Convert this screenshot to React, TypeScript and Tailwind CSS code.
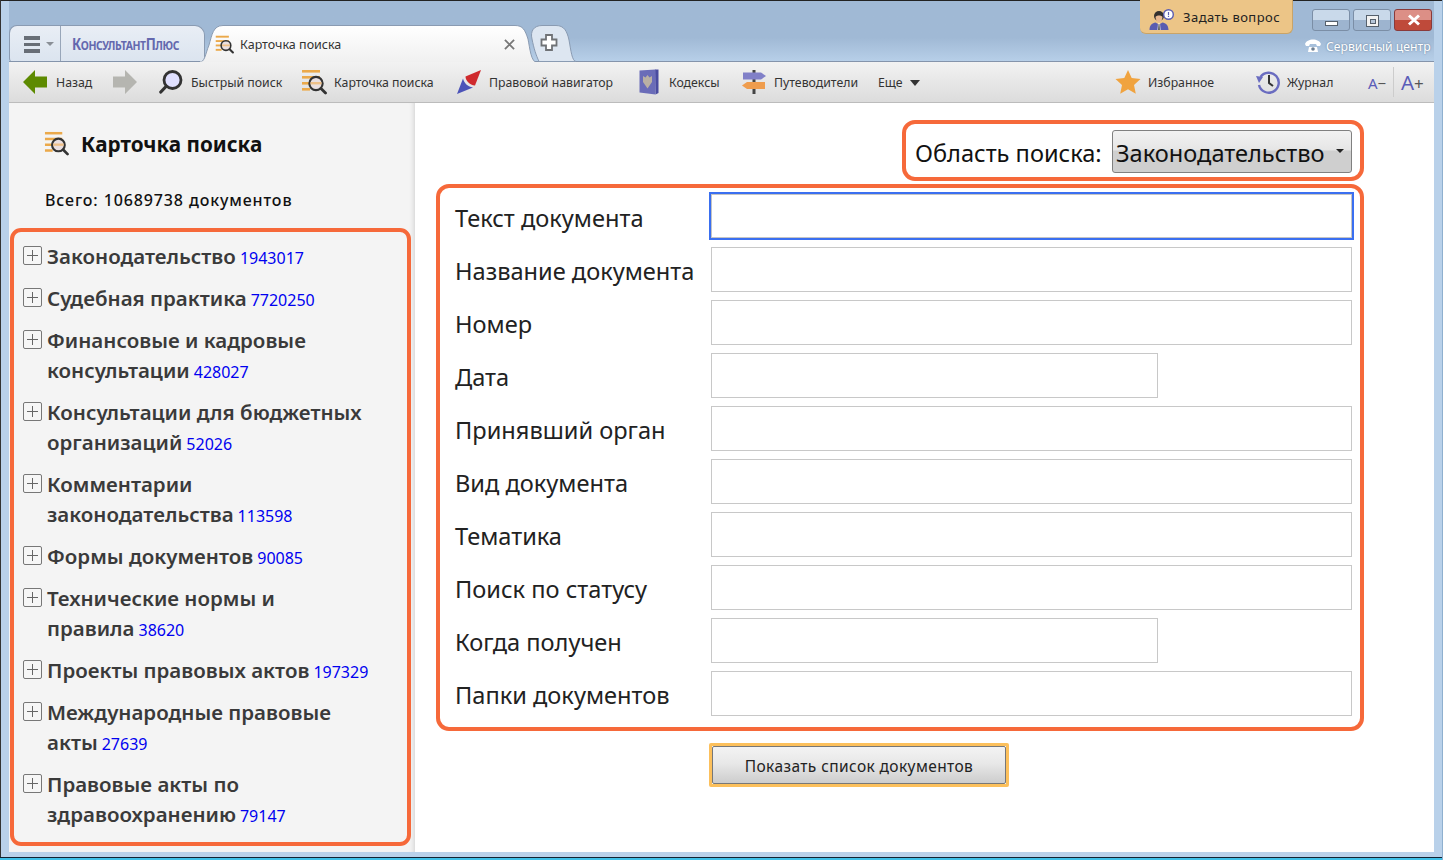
import React from "react";

const font = "font-['Noto_Sans','Open_Sans',sans-serif]";
const num = "font-['Liberation_Sans',Arial,sans-serif]";

function CardIcon({ className }: { className?: string }) {
  return (
    <svg viewBox="0 0 26 26" className={className}>
      <rect x="1" y="1" width="18" height="2.6" fill="#eba94a" />
      <rect x="1" y="7" width="18" height="2.6" fill="#eba94a" />
      <rect x="1" y="13" width="8" height="2.6" fill="#eba94a" />
      <rect x="1" y="19" width="8" height="2.6" fill="#eba94a" />
      <circle cx="15" cy="14.5" r="6.6" fill="#eadfe0" stroke="#333" strokeWidth="2.2" />
      <rect x="9.5" y="13" width="11" height="2.4" fill="#eec088" />
      <path d="M20 19.5l4.5 4.5" stroke="#333" strokeWidth="2.8" strokeLinecap="round" />
    </svg>
  );
}

function Plus() {
  return (
    <span className="absolute left-[14px] top-[5px] flex h-[19px] w-[19px] items-center justify-center rounded-[2px] border border-[#777] bg-[#f6f6f6]">
      <svg viewBox="0 0 17 17" className="h-[17px] w-[17px]">
        <path d="M3 8.5h11M8.5 3v11" stroke="#666" strokeWidth="1" />
      </svg>
    </span>
  );
}

function Item({ top, lines, n }: { top: number; lines: string[]; n: string }) {
  return (
    <div className="absolute left-0 w-[394px]" style={{ top: top - 1 }}>
      <Plus />
      <div className="pl-[38px] text-[20.5px] font-semibold leading-[30px] text-[#3a3a3a]">
        {lines.map((l, i) => (
          <div key={i} className="whitespace-nowrap">
            {l}
            {i === lines.length - 1 && (
              <span className={`ml-[4px] text-[16px] font-normal text-[#0000f0] ${num}`}>{n}</span>
            )}
          </div>
        ))}
      </div>
    </div>
  );
}

const rows: [string, number, boolean][] = [
  ["Название документа", 247, false],
  ["Номер", 300, false],
  ["Дата", 353, true],
  ["Принявший орган", 406, false],
  ["Вид документа", 459, false],
  ["Тематика", 512, false],
  ["Поиск по статусу", 565, false],
  ["Когда получен", 618, true],
  ["Папки документов", 671, false],
];

function TB({ x, label }: { x: number; label: string }) {
  return (
    <span
      className="absolute top-[12px] whitespace-nowrap text-[12.3px] leading-[17px] text-[#333]"
      style={{ left: x }}
    >
      {label}
    </span>
  );
}

export default function App() {
  return (
    <div className={`relative h-[860px] w-[1443px] overflow-hidden bg-[#b9d1ea] ${font}`}>
      {/* window frame */}
      <div className="absolute inset-x-0 top-0 h-[1px] bg-[#222]" />
      <div className="absolute inset-y-0 left-0 w-[1px] bg-[#333]" />
      <div className="absolute inset-x-0 bottom-[2px] h-[1px] bg-[#123]" />
      <div className="absolute inset-x-0 bottom-0 h-[2px] bg-[#3fc0e8]" />
      <div className="absolute right-0 inset-y-0 w-[1px] bg-[#8fb0cf]" />
      <div className="absolute left-[9px] right-[9px] top-[1px] h-[61px] bg-gradient-to-b from-[#a0b9d5] from-60% to-[#b8d0e9]" />

      {/* tabs */}
      <div className="absolute left-[9px] top-[25px] h-[37px] w-[196px] rounded-bl-[4px] rounded-tl-[8px] rounded-tr-[10px] border border-b-0 border-[#8a9bb2] bg-gradient-to-b from-[#e9eef5] to-[#dbe4ef]">
        <div className="absolute left-[50px] top-0 h-[36px] w-[1px] bg-[#98a6b9]" />
        <div className="absolute left-[14px] top-[10px] flex w-[16px] flex-col gap-[3px]">
          <div className="h-[3.5px] bg-[#686e76]" />
          <div className="h-[3.5px] bg-[#686e76]" />
          <div className="h-[3.5px] bg-[#686e76]" />
        </div>
        <div className="absolute left-[36px] top-[16px] h-0 w-0 border-x-[4px] border-t-[4px] border-x-transparent border-t-[#8a8f96]" />
        <span className={`absolute left-[62px] top-[8px] origin-left scale-x-[0.8] whitespace-nowrap text-[16.5px] font-bold leading-[20px] tracking-[-0.5px] text-[#6468ae] ${num}`}>
          К<span className="text-[13px] uppercase">онсультант</span>П<span className="text-[13px] uppercase">люс</span>
        </span>
      </div>
      <div className="absolute left-[9px] right-[9px] top-[61px] h-[1px] bg-[#8494ab]" />
      <div className="absolute left-[197px] top-[25px] h-[38px] w-[340px]">
        <svg viewBox="0 0 340 38" className="absolute inset-0 h-full w-full">
          <defs>
            <linearGradient id="t" x1="0" y1="0" x2="0" y2="1">
              <stop offset="0" stopColor="#ffffff" />
              <stop offset="1" stopColor="#f0f0f0" />
            </linearGradient>
          </defs>
          <path d="M0 37.5 H2 C8 37 8 30 12 20 C15 10 16 0.5 26 0.5 H318 C326 0.5 328 5 331 14 C333 24 334 37 340 37.5 V38 H0Z" fill="url(#t)" stroke="#8a9bb2" />
          <rect x="3" y="36.500" width="332" height="2" fill="#f0f0f0" />
        </svg>
      </div>
      <CardIcon className="absolute left-[215px] top-[35px] h-[19px] w-[19px]" />
      <span className="absolute left-[240px] top-[36px] text-[12.5px] leading-[17px] text-[#333]">Карточка поиска</span>
      <svg viewBox="0 0 12 12" className="absolute left-[504px] top-[39px] h-[11px] w-[11px]">
        <path d="M1 1l10 10M11 1L1 11" stroke="#777" strokeWidth="2" />
      </svg>
      <div className="absolute left-[530px] top-[25px] h-[37px] w-[46px]">
        <svg viewBox="0 0 46 37" className="absolute inset-0 h-full w-full">
          <path d="M2 14 C0 6 4 0.5 12 0.5 H26 C34 0.5 37 6 39 15 C41 26 42 36 46 36.5 H9 C6 30 4 24 2 14Z" fill="#dde6f1" stroke="#8a9bb2" />
          <path d="M17 12h6v4.5h4.5v6H23V27h-6v-4.500h-4.500v-6H17Z" transform="translate(-1,-2)" fill="#fff" stroke="#6f7276" strokeWidth="1.800" />
        </svg>
      </div>

      {/* top-right */}
      <div className="absolute left-[1140px] top-0 h-[34px] w-[153px] rounded-b-[6px] border-b border-r border-[#c9a468] bg-[#ecc587]">
        <svg viewBox="0 0 26 22" className="absolute left-[9px] top-[9px] h-[22px] w-[26px]">
          <circle cx="10" cy="7" r="5" fill="#33302e" />
          <path d="M6.500 8c1-2 6-2 7 0 0 3-2 5-3.500 5S6.500 11 6.500 8Z" fill="#e9b891" />
          <path d="M0.500 21c0-5 3-7 6-7.500l3.500 2 3.500-2c3 .5 6 2.500 6 7.500Z" fill="#5a5cb0" />
          <path d="M9 14.500h2l.5 6.500h-3Z" fill="#fff" />
          <path d="M9.600 15h.8l.3 6h-1.400Z" fill="#222" />
          <circle cx="19.500" cy="5.500" r="4.800" fill="#fff" stroke="#5a5cb0" strokeWidth="1.400" />
          <path d="M19.500 3v3.200M19.500 7v1" stroke="#5a5cb0" strokeWidth="1.200" />
        </svg>
        <span className="absolute left-[43px] top-[8px] whitespace-nowrap text-[13px] leading-[18px] tracking-[0.45px] text-[#222]">Задать вопрос</span>
      </div>
      <div className="absolute left-[1312px] top-[9px] flex gap-[3px]">
        <div className="relative h-[22px] w-[38px] rounded-[3px] border border-[#7b8ea6] bg-gradient-to-b from-[#c9d9ea] from-50% to-[#9db4cf] to-50%">
          <div className="absolute left-[12px] top-[11px] h-[5px] w-[13px] border border-[#55606c] bg-white" />
        </div>
        <div className="relative h-[22px] w-[38px] rounded-[3px] border border-[#7b8ea6] bg-gradient-to-b from-[#c9d9ea] from-50% to-[#9db4cf] to-50%">
          <div className="absolute left-[12px] top-[5px] flex h-[12px] w-[13px] items-center justify-center border border-[#55606c] bg-[#f2f2f2]">
            <div className="h-[5px] w-[6px] border border-[#55606c] bg-[#b5c6da]" />
          </div>
        </div>
        <div className="relative h-[22px] w-[38px] rounded-[3px] border border-[#8a3a3a] bg-gradient-to-b from-[#dc8f86] from-50% to-[#bf4a3a] to-50%">
          <svg viewBox="0 0 14 12" className="absolute left-[12px] top-[4px] h-[12px] w-[14px]">
            <path d="M2 1.500l10 9M12 1.500l-10 9" stroke="#fff" strokeWidth="3" />
          </svg>
        </div>
      </div>
      <svg viewBox="0 0 16 14" className="absolute left-[1305px] top-[39px] h-[14px] w-[16px]">
        <path d="M0 5c2-6 14-6 16 0l-1 2h-3l-1-2H5L4 7H1Z" fill="#fff" />
        <path d="M3 13l1-5h8l1 5Z" fill="#fff" />
        <circle cx="8" cy="10" r="1.800" fill="#6e7f92" />
      </svg>
      <span className="absolute left-[1326px] top-[38px] whitespace-nowrap text-[12.2px] leading-[17px] text-white [text-shadow:0_0_2px_#5b7490]">Сервисный центр</span>

      {/* toolbar */}
      <div className="absolute left-[9px] right-[9px] top-[62px] h-[41px] border-b border-[#bcbcbc] bg-gradient-to-b from-[#f2f2f2] to-[#dcdcdc]">
        <svg viewBox="0 0 24 24" className="absolute left-[14px] top-[8px] h-[24px] w-[24px]">
          <path d="M0 12L12 0v6.500h12v11H12V24Z" fill="#5d8a00" />
        </svg>
        <TB x={47} label="Назад" />
        <svg viewBox="0 0 24 24" className="absolute left-[104px] top-[8px] h-[24px] w-[24px]">
          <path d="M24 12L12 0v6.500H0v11h12V24Z" fill="#b5b5b0" />
        </svg>
        <svg viewBox="0 0 24 24" className="absolute left-[150px] top-[8px] h-[24px] w-[24px]">
          <circle cx="13.500" cy="10" r="8.500" fill="#e0e0ff" stroke="#333" strokeWidth="2.800" />
          <path d="M7 16.500L1.800 22" stroke="#333" strokeWidth="3.200" strokeLinecap="round" />
        </svg>
        <TB x={182} label="Быстрый поиск" />
        <CardIcon className="absolute left-[292px] top-[7px] h-[26px] w-[26px]" />
        <TB x={325} label="Карточка поиска" />
        <svg viewBox="0 0 26 26" className="absolute left-[447px] top-[7px] h-[26px] w-[26px]">
          <path d="M25 1L9.500 7.500c0 4 4 8.500 9.500 9Z" fill="#cf2a2e" />
          <path d="M1 25L7 9.500c1 4 4 8 10 9Z" fill="#4c53b8" />
        </svg>
        <TB x={480} label="Правовой навигатор" />
        <svg viewBox="0 0 20 26" className="absolute left-[630px] top-[7px] h-[26px] w-[20px]">
          <path d="M16 0.500h3.500V24l-3 1.500Z" fill="#4a4ca0" />
          <path d="M0.500 1.500L16.500 0.500V25.500L0.500 23.500Z" fill="#6a6cb8" />
          <path d="M8.500 6l2 2.500 2.500-1.500v6l-4.500 6.500L4 13V7l2.500 1.500Z" fill="#b9b0a4" />
        </svg>
        <TB x={660} label="Кодексы" />
        <svg viewBox="0 0 24 24" className="absolute left-[733px] top-[8px] h-[24px] w-[24px]">
          <rect x="10.500" y="0" width="3" height="24" fill="#444" />
          <path d="M1 2.500h18l5 3.500-5 3.500H1Z" fill="#8180c8" />
          <path d="M23 12H5l-5 3.500 5 3.500h18Z" fill="#ef9d4e" />
        </svg>
        <TB x={765} label="Путеводители" />
        <TB x={869} label="Еще" />
        <div className="absolute left-[901px] top-[18px] h-0 w-0 border-x-[5.500px] border-t-[6px] border-x-transparent border-t-[#333]" />
        <svg viewBox="0 0 26 26" className="absolute left-[1106px] top-[7px] h-[26px] w-[26px]">
          <path d="M13 1l3.700 8 8.800 1-6.500 6 1.800 8.800L13 20.300 5.200 24.800 7 16 .5 10l8.800-1Z" fill="#f0a33f" />
        </svg>
        <TB x={1139} label="Избранное" />
        <svg viewBox="0 0 26 26" className="absolute left-[1246px] top-[7px] h-[26px] w-[26px]">
          <path d="M5.500 8A10 10 0 1 1 4 16" fill="none" stroke="#6a6cc0" strokeWidth="2.400" />
          <path d="M1 7l7 1-4 6Z" fill="#6a6cc0" />
          <path d="M14 6v8l4 3" fill="none" stroke="#333" strokeWidth="2" />
        </svg>
        <TB x={1278} label="Журнал" />
        <span className="absolute left-[1359px] top-[11px] text-[15px] leading-[20px] text-[#5a5cb8]">А<span className="text-[#555]">−</span></span>
        <div className="absolute left-[1384px] top-[5px] h-[30px] w-[1px] bg-[#ccc]" />
        <span className="absolute left-[1392px] top-[6px] text-[20.5px] leading-[28px] text-[#5a5cb8]">А<span className="text-[17px] text-[#555]">+</span></span>
      </div>

      {/* main */}
      <div className="absolute left-[9px] right-[9px] top-[103px] bottom-[8px] bg-white">
        <div className="absolute inset-y-0 left-0 w-[406px] bg-[#f4f4f4] shadow-[inset_-5px_0_5px_-4px_#d0d0d0]" />
      </div>

      {/* sidebar header */}
      <CardIcon className="absolute left-[44px] top-[131px] h-[25px] w-[25px]" />
      <span className="absolute left-[81px] top-[131px] whitespace-nowrap text-[20.7px] font-bold leading-[27px] text-[#111]">Карточка поиска</span>
      <span className="absolute left-[45px] top-[190px] whitespace-nowrap text-[16px] font-medium leading-[21px] tracking-[0.88px] text-[#111]">Всего: 10689738 документов</span>

      {/* sidebar list */}
      <div className="absolute left-[10px] top-[228px] h-[618px] w-[401px] rounded-[11px] border-[4px] border-[#f6693a]" />
      <div className="absolute left-[9px] top-[228px]">
        <Item top={14} lines={["Законодательство"]} n="1943017" />
        <Item top={56} lines={["Судебная практика"]} n="7720250" />
        <Item top={98} lines={["Финансовые и кадровые", "консультации"]} n="428027" />
        <Item top={170} lines={["Консультации для бюджетных", "организаций"]} n="52026" />
        <Item top={242} lines={["Комментарии", "законодательства"]} n="113598" />
        <Item top={314} lines={["Формы документов"]} n="90085" />
        <Item top={356} lines={["Технические нормы и", "правила"]} n="38620" />
        <Item top={428} lines={["Проекты правовых актов"]} n="197329" />
        <Item top={470} lines={["Международные правовые", "акты"]} n="27639" />
        <Item top={542} lines={["Правовые акты по", "здравоохранению"]} n="79147" />
      </div>

      {/* search area */}
      <div className="absolute left-[902px] top-[120px] h-[61px] w-[462px] rounded-[13px] border-[4px] border-[#f6693a]">
        <span className="absolute left-[9px] top-[13px] whitespace-nowrap text-[23.6px] leading-[32px] text-[#111]">Область поиска:</span>
      </div>
      <div className="absolute left-[1112px] top-[130px] h-[43px] w-[240px] rounded-[3px] border border-[#808080] bg-gradient-to-b from-[#f2f2f2] from-0% via-[#e6e6e6] via-45% to-[#cfcfcf] to-50%">
        <span className="absolute left-[3px] top-[6px] whitespace-nowrap text-[23.6px] leading-[32px] text-[#111]">Законодательство</span>
        <div className="absolute left-[223px] top-[18px] h-0 w-0 border-x-[4.500px] border-t-[4px] border-x-transparent border-t-[#222]" />
      </div>

      {/* form */}
      <div className="absolute left-[436px] top-[184px] h-[547px] w-[928px] rounded-[13px] border-[4px] border-[#f6693a]" />
      <span className="absolute left-[455px] top-[202px] whitespace-nowrap text-[23.6px] leading-[32px] text-[#222]">Текст документа</span>
      <div className="absolute left-[709px] top-[192px] h-[48px] w-[645px] border-[2px] border-[#3a6ff0] bg-white outline outline-1 -outline-offset-3 outline-[#c4c4c4]" />
      {rows.map(([l, y, short]) => (
        <React.Fragment key={l}>
          <span className="absolute left-[455px] whitespace-nowrap text-[23.6px] leading-[32px] text-[#222]" style={{ top: y + 8 }}>{l}</span>
          <div
            className="absolute left-[711px] h-[45px] border border-[#c8c8c8] bg-white"
            style={{ top: y, width: short ? 447 : 641 }}
          />
        </React.Fragment>
      ))}

      {/* submit */}
      <div className="absolute left-[709px] top-[743px] h-[44px] w-[300px] rounded-[2px] border-[3px] border-[#fcc05c]">
        <button className="h-full w-full whitespace-nowrap rounded-[2px] border border-[#777] bg-gradient-to-b from-[#f3f3f3] via-[#e8e8e8] via-45% to-[#cdcdcd] to-100% pt-[2px] text-[15.5px] leading-[20px] tracking-[0.4px] text-[#222]">
          Показать список документов
        </button>
      </div>
    </div>
  );
}
